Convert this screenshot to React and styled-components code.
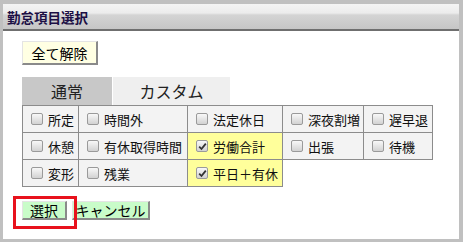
import React, { useState } from 'react';
import styled, { createGlobalStyle } from 'styled-components';

const GlobalStyle = createGlobalStyle`
  html, body {
    margin: 0;
    background: #c0c0c0;
  }
  body {
    font-family: "Noto Sans CJK JP", "Noto Sans", sans-serif;
  }
`;

const Frame = styled.div`
  width: 463px;
  height: 242px;
  box-sizing: border-box;
  padding: 4px 4px 3px 3px;
`;

const Panel = styled.div`
  background: #fff;
  height: 235px;
  display: flex;
  flex-direction: column;
`;

const Header = styled.div`
  height: 27px;
  box-sizing: border-box;
  padding: 4px 0 0 4px;
  background: linear-gradient(#f4f4f4 0, #ececec 9px, #d4d4d4 11px, #c6c6c6 100%);
  border-bottom: 2px solid #6f6f6f;
  font-size: 13.5px;
  font-weight: bold;
  line-height: 18px;
  color: #1c0f45;
`;

const Body = styled.div`
  padding: 10px 0 0 19px;
  display: flex;
  flex-direction: column;
  align-items: flex-start;
`;

const Button = styled.button`
  font-family: inherit;
  width: ${p => p.$w}px;
  height: ${p => p.$h || 19}px;
  box-sizing: border-box;
  padding: 0;
  background: ${p => p.$bg};
  border-style: solid;
  border-width: 1px 2px 2px 1px;
  border-color: #e4e4e4 #8a8a8a #8a8a8a #e4e4e4;
  font-size: ${p => p.$fs || 14}px;
  line-height: 1;
  color: #000;
  cursor: pointer;
`;

const Tabs = styled.div`
  display: flex;
  margin-top: 12px;
`;

const Tab = styled.div`
  width: ${p => p.$w}px;
  height: 28px;
  display: flex;
  align-items: center;
  justify-content: center;
  font-size: 16px;
  color: #222;
  background: ${p => (p.$active ? '#c8c8c8' : '#efefef')};
  border-left: ${p => (p.$active ? 'none' : '1px solid #fff')};
  cursor: pointer;
`;

const Grid = styled.table`
  border-collapse: collapse;
  table-layout: fixed;
  width: 411px;
`;

const Cell = styled.td`
  height: 26px;
  padding: 0 0 0 8px;
  border: 1px solid #8c8c8c;
  background: ${p => (p.$on ? '#ffff9b' : '#f3f3f3')};
  font-size: 13px;
  color: #111;
  white-space: nowrap;
  cursor: pointer;
`;

const Label = styled.span`
  display: flex;
  align-items: center;
  gap: 5px;
`;

const Box = styled.span`
  width: 10px;
  height: 10px;
  border: 1px solid #9a9a9a;
  border-radius: 2px;
  background: linear-gradient(#f8f8f8, #d2d2d2);
  display: inline-flex;
  align-items: center;
  justify-content: center;
  flex: none;
`;

const Actions = styled.div`
  display: flex;
  gap: 5px;
  margin-top: 14px;
`;

const Marked = styled.div`
  position: relative;
  display: flex;
`;

const RedFrame = styled.div`
  position: absolute;
  left: -9px;
  top: -5px;
  width: 58px;
  height: 27px;
  border: 3px solid #e8121c;
  pointer-events: none;
`;

const columns = [56, 109, 95, 81, 69];

const rows = [
  ['所定', '時間外', '法定休日', '深夜割増', '遅早退'],
  ['休憩', '有休取得時間', '労働合計', '出張', '待機'],
  ['変形', '残業', '平日＋有休'],
];

function Check({ on }) {
  return (
    <Box>
      {on && (
        <svg width="9" height="9" viewBox="0 0 9 9">
          <path d="M1.2 4.6 L3.5 7 L7.8 1.6" fill="none" stroke="#333" strokeWidth="1.8" />
        </svg>
      )}
    </Box>
  );
}

export default function App() {
  const [checked, setChecked] = useState({ 労働合計: true, '平日＋有休': true });
  const [tab, setTab] = useState(0);

  const toggle = name => setChecked(c => ({ ...c, [name]: !c[name] }));

  return (
    <Frame>
      <GlobalStyle />
      <Panel>
        <Header>勤怠項目選択</Header>
        <Body>
          <Button $bg="#ffffe3" $w={76} $h={24} $fs={14} onClick={() => setChecked({})}>
            全て解除
          </Button>
          <Tabs>
            <Tab $w={90} $active={tab === 0} onClick={() => setTab(0)}>通常</Tab>
            <Tab $w={117} $active={tab === 1} onClick={() => setTab(1)}>カスタム</Tab>
          </Tabs>
          <Grid>
            <colgroup>
              {columns.map((w, i) => <col key={i} style={{ width: w }} />)}
            </colgroup>
            <tbody>
              {rows.map((row, r) => (
                <tr key={r}>
                  {row.map(name => (
                    <Cell key={name} $on={checked[name]} onClick={() => toggle(name)}>
                      <Label>
                        <Check on={checked[name]} />
                        {name}
                      </Label>
                    </Cell>
                  ))}
                </tr>
              ))}
            </tbody>
          </Grid>
          <Actions>
            <Marked>
              <Button $bg="#c9fcc9" $w={45}>選択</Button>
              <RedFrame />
            </Marked>
            <Button $bg="#c9fcc9" $w={78}>キャンセル</Button>
          </Actions>
        </Body>
      </Panel>
    </Frame>
  );
}
